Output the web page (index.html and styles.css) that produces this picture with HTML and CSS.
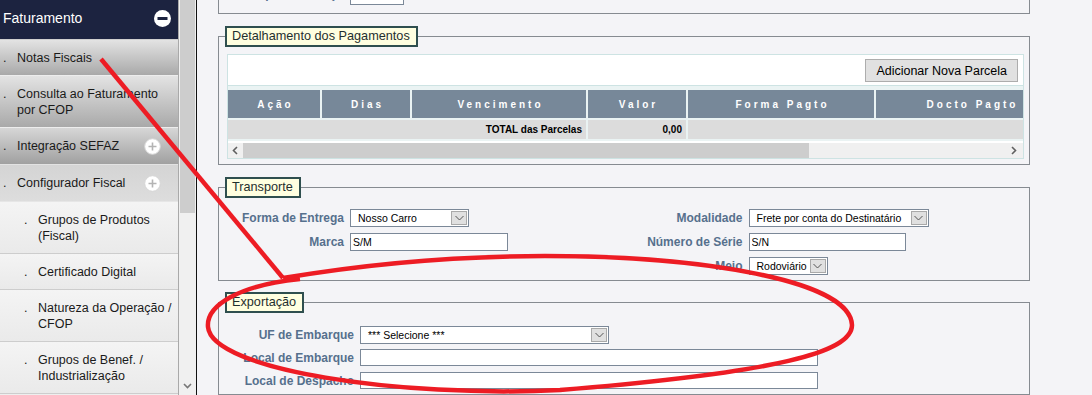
FILE: index.html
```html
<!DOCTYPE html>
<html lang="pt-BR">
<head>
    <meta charset="UTF-8">
    <title>Faturamento - Notas Fiscais</title>
    <link rel="stylesheet" href="styles.css">
</head>
<body>
    <div class="page">
        <aside class="sidebar">
            <nav class="menu">
                <div class="menu-head">
                    <span>Faturamento</span>
                    <svg class="toggle" width="17" height="17" viewBox="0 0 17 17"><circle cx="8.5" cy="8.5" r="8.5" fill="#fff"/><rect x="3.5" y="7" width="10" height="3" fill="#1c2340"/></svg>
                </div>
                <div class="item top"><span>Notas Fiscais</span></div>
                <div class="item top"><span>Consulta ao Faturamento<br>por CFOP</span></div>
                <div class="item closed"><span>Integração SEFAZ</span><svg class="plus" width="17" height="17" viewBox="0 0 17 17"><circle cx="8.5" cy="8.5" r="7.8" fill="#fff" stroke="#d6d6d6"/><path d="M8.5 4.5v8M4.5 8.5h8" stroke="#b4b4b4" stroke-width="1.6"/></svg></div>
                <div class="item open"><span>Configurador Fiscal</span><svg class="plus" width="17" height="17" viewBox="0 0 17 17"><circle cx="8.5" cy="8.5" r="7.8" fill="#fff" stroke="#d6d6d6"/><path d="M8.5 4.5v8M4.5 8.5h8" stroke="#b4b4b4" stroke-width="1.6"/></svg></div>
                <div class="item sub"><span>Grupos de Produtos<br>(Fiscal)</span></div>
                <div class="item sub"><span>Certificado Digital</span></div>
                <div class="item sub"><span>Natureza da Operação /<br>CFOP</span></div>
                <div class="item sub"><span>Grupos de Benef. /<br>Industrialização</span></div>
            </nav>
            <div class="vscroll">
                <div class="vthumb"></div>
                <svg class="vdown" width="17" height="14" viewBox="0 0 17 14"><path d="M5 5l3.5 3.5L12 5" fill="none" stroke="#777" stroke-width="1.6"/></svg>
            </div>
        </aside>

        <main class="content">
            <fieldset class="group cut">
                <div class="field">
                    <label>Tipo de Serviço</label>
                    <input type="text" class="short">
                </div>
            </fieldset>

            <fieldset class="group">
                <legend>Detalhamento dos Pagamentos</legend>
                <div class="grid-box">
                    <div class="grid-tools">
                        <button type="button">Adicionar Nova Parcela</button>
                    </div>
                    <div class="grid-scroll">
                        <table class="grid">
                            <thead>
                                <tr>
                                    <th style="width:92px">Ação</th>
                                    <th style="width:88px">Dias</th>
                                    <th style="width:174px">Vencimento</th>
                                    <th style="width:98px">Valor</th>
                                    <th style="width:186px">Forma Pagto</th>
                                    <th style="width:190px">Docto Pagto</th>
                                    <th style="width:230px"></th>
                                </tr>
                            </thead>
                            <tbody>
                                <tr class="total">
                                    <td colspan="3">TOTAL das Parcelas</td>
                                    <td>0,00</td>
                                    <td colspan="3"></td>
                                </tr>
                            </tbody>
                        </table>
                    </div>
                    <div class="hscroll">
                        <svg class="hs-arrow" width="15" height="15" viewBox="0 0 15 15"><path d="M9 4L5.5 7.5 9 11" fill="none" stroke="#606060" stroke-width="1.6"/></svg>
                        <div class="hs-thumb"></div>
                        <svg class="hs-arrow end" width="15" height="15" viewBox="0 0 15 15"><path d="M6 4l3.5 3.5L6 11" fill="none" stroke="#606060" stroke-width="1.6"/></svg>
                    </div>
                </div>
            </fieldset>

            <fieldset class="group">
                <legend>Transporte</legend>
                <div class="cols">
                    <div class="col">
                        <div class="field">
                            <label>Forma de Entrega</label>
                            <div class="select w119"><span class="val">Nosso Carro</span><span class="btn"><svg width="9" height="6" viewBox="0 0 9 6"><path d="M0.5 1l4 4 4-4" fill="none" stroke="#555"/></svg></span></div>
                        </div>
                        <div class="field">
                            <label>Marca</label>
                            <input type="text" value="S/M" class="w158">
                        </div>
                    </div>
                    <div class="col">
                        <div class="field">
                            <label>Modalidade</label>
                            <div class="select w180"><span class="val">Frete por conta do Destinatário</span><span class="btn"><svg width="9" height="6" viewBox="0 0 9 6"><path d="M0.5 1l4 4 4-4" fill="none" stroke="#555"/></svg></span></div>
                        </div>
                        <div class="field">
                            <label>Número de Série</label>
                            <input type="text" value="S/N" class="w157">
                        </div>
                        <div class="field">
                            <label>Meio</label>
                            <div class="select w79"><span class="val">Rodoviário</span><span class="btn"><svg width="9" height="6" viewBox="0 0 9 6"><path d="M0.5 1l4 4 4-4" fill="none" stroke="#555"/></svg></span></div>
                        </div>
                    </div>
                </div>
            </fieldset>

            <fieldset class="group export">
                <legend>Exportação</legend>
                <div class="field">
                    <label>UF de Embarque</label>
                    <div class="select w249"><span class="val">*** Selecione ***</span><span class="btn"><svg width="9" height="6" viewBox="0 0 9 6"><path d="M0.5 1l4 4 4-4" fill="none" stroke="#555"/></svg></span></div>
                </div>
                <div class="field">
                    <label>Local de Embarque</label>
                    <input type="text" class="w458">
                </div>
                <div class="field">
                    <label>Local de Despacho</label>
                    <input type="text" class="w458">
                </div>
            </fieldset>
        </main>

        <!-- marcação em vermelho por cima da tela -->
        <svg class="marks" width="1092" height="395" viewBox="0 0 1092 395">
            <path d="M101 59L283 278" stroke="#ed1c24" stroke-width="4.5" fill="none"/>
            <path d="M283 278C360 265 450 256 545 256C700 256 850 280 852 325C852 352 780 372 560 390C400 398 212 370 208 327C206 305 240 285 300 279" stroke="#ed1c24" stroke-width="4.5" fill="none"/>
        </svg>
    </div>
</body>
</html>
```

FILE: styles.css
```css
* {
    margin: 0;
    padding: 0;
    box-sizing: border-box;
}

body {
    font-family: "Liberation Sans", Arial, sans-serif;
    background: #f4f4f7;
    color: #000;
    overflow: hidden;
}

.page {
    position: relative;
    display: flex;
    width: 1092px;
    height: 395px;
    overflow: hidden;
}

/* menu lateral */

.sidebar {
    display: flex;
    flex: none;
    width: 197px;
    border-right: 1px solid #111;
}

.menu {
    width: 179px;
    border-right: 1px solid #a9a9a9;
    background: #eeeeee;
}

.menu-head {
    height: 40px;
    padding: 0 7px 3px 3px;
    display: flex;
    align-items: center;
    justify-content: space-between;
    background: #1c2340;
    border-bottom: 1px solid #cfcfcf;
    color: #fff;
    font-size: 14px;
}

.item {
    display: flex;
    align-items: flex-start;
    padding: 10px 3px 9px 3px;
    font-size: 12.5px;
    line-height: 16px;
    color: #1a1a1a;
    border-bottom: 1px solid #cdcdcd;
    white-space: nowrap;
}

.item::before {
    content: ".";
    flex: none;
    width: 14px;
}

.item span {
    flex: 1;
}

.item .plus {
    flex: none;
    align-self: center;
    margin-right: 14px;
}

.item.top {
    background: linear-gradient(#e3e3e3, #a9a9a9);
    border-bottom-color: #ededed;
}

.item.closed {
    background: linear-gradient(#d6d6d6, #a0a0a0);
    border-bottom-color: #e2e2e2;
}

.item.open {
    background: linear-gradient(#d4d4d4, #dddddd);
    border-bottom-color: #e6e6e6;
}

.item.sub {
    padding-left: 24px;
    background: linear-gradient(#f4f4f4, #eaeaea);
}

.vscroll {
    width: 17px;
    display: flex;
    flex-direction: column;
    background: #f0f0f0;
}

.vthumb {
    height: 213px;
    margin: 0 1px;
    background: #cdcdcd;
}

.vdown {
    margin-top: auto;
    margin-bottom: 2px;
}

/* area principal */

.content {
    flex: 1;
    padding-left: 21px;
    background: #f4f4f7;
}

.group {
    width: 812px;
    min-width: 0;
    margin-top: 12px;
    padding: 0 5px 5px 8px;
    border: 1px solid #868b91;
}

.group.cut {
    margin-top: -25px;
    padding-top: 11px;
    padding-bottom: 8px;
}

.group.cut label {
    margin-bottom: 5px;
}

.group legend {
    margin-left: -2px;
    padding: 1px 6px 1px 5px;
    background: #ffffe0;
    border: 2px solid #2f4f4f;
    color: #1f2f2f;
    font-size: 12.7px;
    line-height: 15px;
}

.field {
    display: flex;
    align-items: center;
    height: 18px;
    margin-bottom: 6px;
}

.field:last-child {
    margin-bottom: 0;
}

.field label {
    flex: none;
    width: 117px;
    margin-right: 6px;
    text-align: right;
    font-size: 12px;
    font-weight: 700;
    color: #56708d;
    white-space: nowrap;
}

.field input {
    height: 18px;
    padding: 0 2px;
    border: 1px solid #7b8898;
    background: #fff;
    font-family: "Liberation Sans", Arial, sans-serif;
    font-size: 10.5px;
    color: #000;
    outline: none;
}

.select {
    display: flex;
    height: 18px;
    border: 1px solid #7b8898;
    background: #fff;
}

.select .val {
    flex: 1;
    padding-left: 7px;
    font-size: 10.5px;
    line-height: 16px;
    white-space: nowrap;
    overflow: hidden;
}

.select .btn {
    flex: none;
    width: 16px;
    margin: 1px;
    display: flex;
    align-items: center;
    justify-content: center;
    background: #e0e0e0;
    border: 1px solid #a9a9a9;
}

.short { width: 54px; }
.w79 { width: 79px; }
.w119 { width: 119px; }
.w157 { width: 157px; }
.w158 { width: 158px; }
.w180 { width: 180px; }
.w249 { width: 249px; }
.w458 { width: 458px; }

/* grade de parcelas */

.grid-box {
    width: 797px;
    margin-top: 7px;
    background: #fff;
    border: 1px solid #cde3e3;
}

.grid-tools {
    padding: 4px 5px 3px;
    text-align: right;
    border-bottom: 1px solid #cde3e3;
}

.grid-tools button {
    height: 23px;
    padding: 0 10px;
    background: #e1e1e1;
    border: 1px solid #adadad;
    font-family: "Liberation Sans", Arial, sans-serif;
    font-size: 12.5px;
    color: #000;
}

.grid-scroll {
    overflow: hidden;
    background: #eaf3f3;
}

.grid {
    width: 1074px;
    table-layout: fixed;
    border-collapse: separate;
    border-spacing: 2px;
    margin: 2px 0 0 -2px;
}

.grid th {
    height: 28px;
    padding: 0 0 0 3px;
    background: #778899;
    color: #fff;
    font-size: 10px;
    font-weight: 700;
    letter-spacing: 3px;
    text-align: center;
}

.grid td {
    height: 19px;
    padding: 0 4px;
    background: #dcdcdc;
    font-size: 10px;
    font-weight: 700;
    text-align: right;
}

.hscroll {
    display: flex;
    height: 15px;
    background: #f0f0f0;
    border-top: 2px solid #fff;
    box-sizing: content-box;
}

.hs-arrow.end {
    margin-left: auto;
    margin-right: 2px;
}

.hs-thumb {
    width: 566px;
    background: #cdcdcd;
}

.cols {
    display: flex;
    padding-top: 11px;
    padding-bottom: 0;
}

.col {
    width: 400px;
}

.group.export {
    margin-top: 11px;
}

.group.export .field {
    height: 17px;
}

.group.export legend + .field {
    margin-top: 13px;
}

.group.export .field label {
    width: 127px;
}

.group.export .field input {
    height: 17px;
}

.group.export .select {
    height: 18px;
}

.marks {
    position: absolute;
    top: 0;
    left: 0;
    pointer-events: none;
}
```
